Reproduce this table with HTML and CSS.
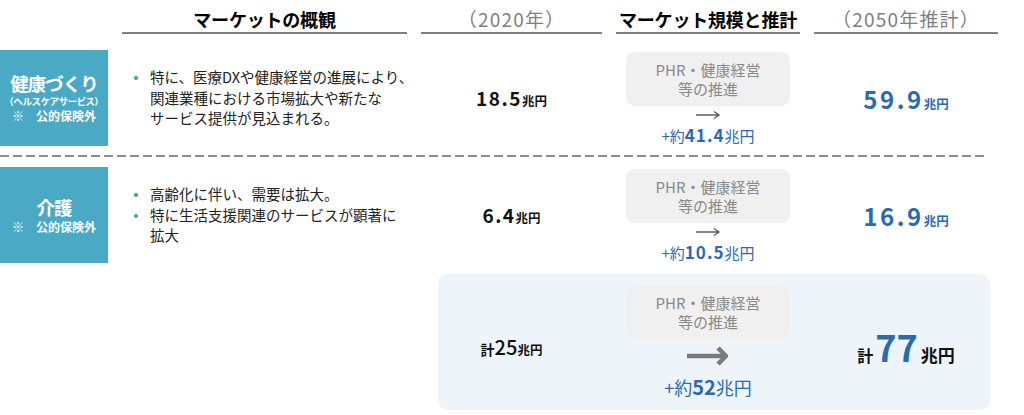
FILE: index.html
```html
<!DOCTYPE html>
<html lang="ja">
<head>
<meta charset="utf-8">
<title>マーケットの概観</title>
<link rel="stylesheet" href="styles.css">
</head>
<body>
<div class="page">
  <div class="grid head">
    <div></div>
    <div class="hcell strong">マーケットの概観</div>
    <div class="hcell muted">（2020年）</div>
    <div class="hcell strong">マーケット規模と推計</div>
    <div class="hcell muted">（2050年推計）</div>
  </div>

  <div class="grid row">
    <div class="label">
      <div class="main">健康づくり</div>
      <div class="sub">（ヘルスケアサービス）</div>
      <div class="note">※　公的保険外</div>
    </div>
    <div class="ov">
      <ul>
        <li><span>特に、医療DXや健康経営の進展により、<br>関連業種における市場拡大や新たな<br>サービス提供が見込まれる。</span></li>
      </ul>
    </div>
    <div class="val now"><span class="num">18.5</span><span class="unit">兆円</span></div>
    <div class="mk">
      <div class="pbox">PHR・健康経営<br>等の推進</div>
      <svg class="arr" width="26" height="10" viewBox="0 0 26 10"><path d="M1 5H24M19 1.5L24 5L19 8.5" fill="none" stroke="#5f5f5f" stroke-width="1.4"/></svg>
      <div class="inc">+約<b>41.4</b>兆円</div>
    </div>
    <div class="val fut"><span class="num">59.9</span><span class="unit">兆円</span></div>
  </div>

  <div class="sep"><div class="dash"></div></div>

  <div class="grid row">
    <div class="label">
      <div class="main">介護</div>
      <div class="note">※　公的保険外</div>
    </div>
    <div class="ov">
      <ul>
        <li><span>高齢化に伴い、需要は拡大。</span></li>
        <li><span>特に生活支援関連のサービスが顕著に<br>拡大</span></li>
      </ul>
    </div>
    <div class="val now"><span class="num">6.4</span><span class="unit">兆円</span></div>
    <div class="mk">
      <div class="pbox">PHR・健康経営<br>等の推進</div>
      <svg class="arr" width="26" height="10" viewBox="0 0 26 10"><path d="M1 5H24M19 1.5L24 5L19 8.5" fill="none" stroke="#5f5f5f" stroke-width="1.4"/></svg>
      <div class="inc">+約<b>10.5</b>兆円</div>
    </div>
    <div class="val fut"><span class="num">16.9</span><span class="unit">兆円</span></div>
  </div>

  <div class="grid total">
    <div class="tbox"></div>
    <div class="tnow"><span class="k">計</span><span class="n">25</span><span class="u">兆円</span></div>
    <div class="mk tmk">
      <div class="pbox">PHR・健康経営<br>等の推進</div>
      <svg class="bigarr" width="46" height="22" viewBox="0 0 46 22"><path d="M2 11H41M33 3L41 11L33 19" fill="none" stroke="#7a7a7a" stroke-width="4.5" stroke-linejoin="round"/></svg>
      <div class="inc big">+約<b>52</b>兆円</div>
    </div>
    <div class="tfut"><span class="k">計</span><span class="n">77</span><span class="u">兆円</span></div>
  </div>
</div>
</body>
</html>
```

FILE: styles.css
```css
html, body {
  margin: 0;
  padding: 0;
  background: #ffffff;
}
body {
  width: 1024px;
  height: 415px;
  overflow: hidden;
  font-family: "Noto Sans CJK JP", "Noto Sans", sans-serif;
  color: #1a1a1a;
}
.page {
  display: flex;
  flex-direction: column;
}
.grid {
  display: grid;
  grid-template-columns: 108px 285px 181px 184px 184px;
  column-gap: 14px;
}
.head {
  height: 34px;
}
.hcell {
  box-sizing: border-box;
  height: 34px;
  border-bottom: 2px solid #808080;
  text-align: center;
  font-size: 18px;
  line-height: 22px;
  padding-top: 8px;
}
.hcell.strong {
  font-weight: 700;
  color: #000;
  letter-spacing: -0.2px;
}
.hcell.muted {
  color: #7f7f7f;
  font-size: 19px;
  letter-spacing: 1.2px;
}
.row {
  height: 95px;
}
.head + .row {
  margin-top: 16px;
}
.label {
  background: #4aaac5;
  color: #fff;
  font-weight: 700;
  display: flex;
  flex-direction: column;
  align-items: center;
  justify-content: center;
}
.label .main {
  font-size: 18.5px;
  line-height: 23px;
  letter-spacing: -1px;
}
.label .sub {
  font-size: 9.5px;
  line-height: 13px;
  font-feature-settings: "palt";
}
.label .note {
  font-size: 12px;
  line-height: 16px;
}
.ov {
  display: flex;
  align-items: center;
}
.ov ul {
  list-style: none;
  margin: 0;
  padding: 0;
  font-size: 14.5px;
  line-height: 20.5px;
  color: #222;
  white-space: nowrap;
}
.ov li {
  display: flex;
  align-items: flex-start;
}
.ov li::before {
  content: "";
  flex: none;
  width: 4px;
  height: 4px;
  border-radius: 50%;
  background: #33b06a;
  margin: 9px 12px 0 12px;
}
.val {
  display: flex;
  align-items: baseline;
  justify-content: center;
  padding-top: 36px;
  box-sizing: border-box;
  font-weight: 700;
}
.val.now {
  color: #111;
}
.val.now .num {
  font-size: 19px;
  line-height: 24px;
  letter-spacing: 1.5px;
}
.val.now .unit {
  font-size: 12.5px;
}
.val.fut {
  color: #2a6ab0;
  padding-top: 34px;
}
.val.fut .num {
  font-size: 24px;
  line-height: 30px;
  letter-spacing: 2.5px;
}
.val.fut .unit {
  font-size: 12.5px;
}
.mk {
  display: flex;
  flex-direction: column;
  align-items: center;
  padding-top: 2px;
}
.pbox {
  box-sizing: border-box;
  width: 164px;
  height: 54px;
  background: #f0f0f0;
  border-radius: 9px;
  color: #8a8a8a;
  font-size: 15px;
  line-height: 19px;
  text-align: center;
  padding-top: 8px;
}
.arr {
  display: block;
  margin-top: 4px;
}
.inc {
  margin-top: 5px;
  color: #2a6ab0;
  font-size: 15px;
  line-height: 20px;
}
.inc b {
  font-size: 17px;
  letter-spacing: 1px;
}
.sep {
  height: 22px;
  display: flex;
  align-items: center;
}
.dash {
  width: 988px;
  height: 2px;
  background: repeating-linear-gradient(to right, #8d8d8d 0 9px, transparent 9px 13px);
}
.total {
  margin-top: 12px;
  height: 136px;
  grid-template-rows: 136px;
}
.tbox {
  grid-column: 3 / 6;
  grid-row: 1;
  margin-left: 17px;
  margin-right: 8px;
  background: #eef5fa;
  border-radius: 9px;
}
.tnow, .tfut {
  grid-row: 1;
  display: flex;
  align-items: baseline;
  justify-content: center;
  font-weight: 700;
  box-sizing: border-box;
}
.tnow {
  grid-column: 3;
  padding-top: 60px;
  color: #111;
}
.tnow .k {
  font-size: 14px;
}
.tnow .n {
  font-size: 20px;
  line-height: 26px;
  font-weight: 500;
}
.tnow .u {
  font-size: 12.5px;
}
.tmk {
  grid-column: 4;
  grid-row: 1;
  padding-top: 11px;
}
.tmk .pbox {
  height: 55px;
}
.bigarr {
  display: block;
  margin-top: 5px;
}
.inc.big {
  margin-top: 8px;
  font-size: 18px;
  line-height: 24px;
}
.inc.big b {
  font-size: 20px;
  letter-spacing: 0;
}
.tfut {
  grid-column: 5;
  padding-top: 51px;
  color: #111;
}
.tfut .k {
  font-size: 16px;
}
.tfut .n {
  font-size: 36px;
  line-height: 42px;
  color: #2a6ab0;
  margin: 0 3px 0 2px;
}
.tfut .u {
  font-size: 17px;
}
```
